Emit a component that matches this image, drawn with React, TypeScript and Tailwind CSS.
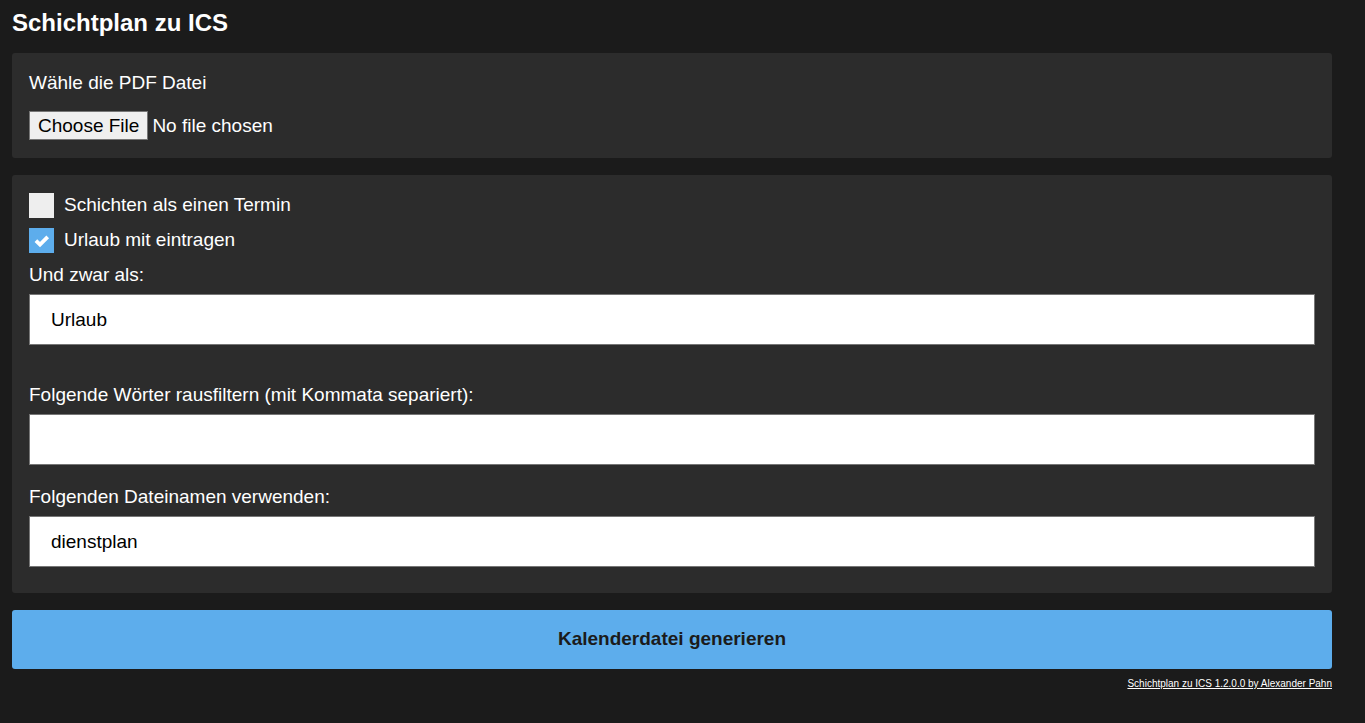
import React from "react";

const field =
  "block w-full h-[51px] rounded-none border border-[#767676] bg-white px-[21px] text-[19px] text-black";

function CheckRow({ id, label, defaultChecked }: { id: string; label: string; defaultChecked?: boolean }) {
  return (
    <label htmlFor={id} className="mb-[10px] flex h-[25px] cursor-pointer items-start">
      <input id={id} type="checkbox" defaultChecked={defaultChecked} className="peer sr-only" />
      <span className="size-[25px] shrink-0 bg-[#eeeeee] peer-checked:bg-[#5dadec] peer-checked:[&>svg]:block">
        <svg className="hidden" width="25" height="25" viewBox="0 0 25 25" fill="none" stroke="white" strokeWidth="3.8">
          <path d="M6.9 12.6 L11 16.6 L18.7 8.9" />
        </svg>
      </span>
      <span className="ml-[10px] leading-[23px]">{label}</span>
    </label>
  );
}

function TextField({ id, label, value, className }: { id: string; label: string; value?: string; className: string }) {
  return (
    <div className={className}>
      <label htmlFor={id} className="mb-[7px] block leading-6">
        {label}
      </label>
      <input id={id} type="text" defaultValue={value} className={field} />
    </div>
  );
}

export default function App() {
  return (
    <div className="min-h-screen bg-[#1b1b1b] pt-2 pr-[33px] pb-8 pl-3 font-['Liberation_Sans',Arial,sans-serif] text-[19px] text-white">
      <h1 className="mb-4 text-2xl leading-[29px] font-bold">Schichtplan zu ICS</h1>
      <form onSubmit={(e) => e.preventDefault()}>
        <section className="mb-[17px] rounded-[3px] bg-[#2c2c2c] px-[17px] py-[18px]">
          <label htmlFor="pdf" className="mb-4 block leading-6">
            Wähle die PDF Datei
          </label>
          <input
            id="pdf"
            type="file"
            accept="application/pdf"
            className="block h-[29px] w-full file:mr-1 file:h-[29px] file:rounded-none file:border file:border-solid file:border-[#767676] file:bg-[#efefef] file:px-2 file:text-black"
          />
        </section>
        <section className="rounded-[3px] bg-[#2c2c2c] px-[17px] pt-[18px] pb-[26px]">
          <CheckRow id="single" label="Schichten als einen Termin" />
          <CheckRow id="vacation" label="Urlaub mit eintragen" defaultChecked />
          <TextField id="name" label="Und zwar als:" value="Urlaub" className="mb-[38px]" />
          <TextField id="filter" label="Folgende Wörter rausfiltern (mit Kommata separiert):" className="mb-5" />
          <TextField id="filename" label="Folgenden Dateinamen verwenden:" value="dienstplan" className="" />
        </section>
        <button type="submit" className="mt-[17px] block h-[59px] w-full rounded-[3px] bg-[#5dadec] font-bold text-[#1b1b1b]">
          Kalenderdatei generieren
        </button>
      </form>
      <footer className="mt-2 text-right text-[10px] leading-[14px]">
        <a href="#" className="underline">
          Schichtplan zu ICS 1.2.0.0 by Alexander Pahn
        </a>
      </footer>
    </div>
  );
}
